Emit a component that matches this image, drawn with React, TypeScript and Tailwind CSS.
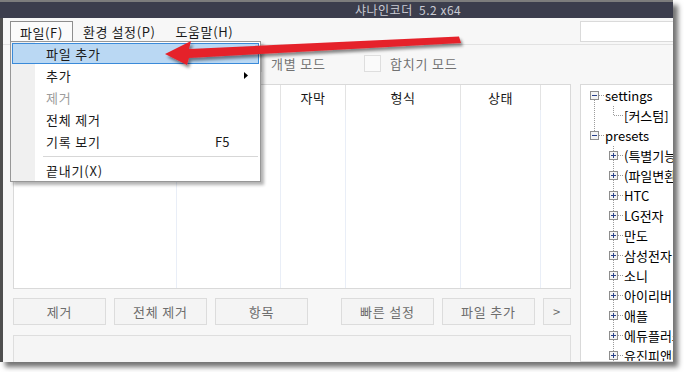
import * as React from "react";

type CellKind = "none" | "vline" | "leaf" | "minusBot" | "minusTop" | "plus";

interface TreeRow {
  cells: CellKind[];
  label: string;
}

const treeRows: TreeRow[] = [
  { cells: ["minusBot"], label: "settings" },
  { cells: ["vline", "leaf"], label: "[커스텀]" },
  { cells: ["minusTop"], label: "presets" },
  { cells: ["none", "plus"], label: "(특별기능)" },
  { cells: ["none", "plus"], label: "(파일변환)" },
  { cells: ["none", "plus"], label: "HTC" },
  { cells: ["none", "plus"], label: "LG전자" },
  { cells: ["none", "plus"], label: "만도" },
  { cells: ["none", "plus"], label: "삼성전자" },
  { cells: ["none", "plus"], label: "소니" },
  { cells: ["none", "plus"], label: "아이리버" },
  { cells: ["none", "plus"], label: "애플" },
  { cells: ["none", "plus"], label: "에듀플러스" },
  { cells: ["none", "plus"], label: "유진피앤티" },
];

const dot = { stroke: "#9b9b9b", strokeWidth: 1, strokeDasharray: "1 1" };

const TreeCell = ({ kind }: { kind: CellKind }) => {
  const hasBox = kind === "minusBot" || kind === "minusTop" || kind === "plus";
  const top = kind === "vline" || kind === "leaf" || kind === "minusTop" || kind === "plus";
  const bottom = kind === "vline" || kind === "minusBot" || kind === "plus";
  const horiz = kind === "leaf" || hasBox;
  return (
    <svg width="19" height="20" className="shrink-0">
      {top && <line x1="9.5" y1="0" x2="9.5" y2={hasBox ? 5 : 10} {...dot} />}
      {bottom && <line x1="9.5" y1={hasBox ? 14 : 10} x2="9.5" y2="20" {...dot} />}
      {horiz && <line x1={hasBox ? 14 : 10} y1="9.5" x2="19" y2="9.5" {...dot} />}
      {hasBox && (
        <>
          <rect x="5.5" y="5.5" width="8" height="8" fill="#f4f4f4" stroke="#8e8e8e" />
          <line x1="7" y1="9.5" x2="12" y2="9.5" stroke="#27408a" />
          {kind === "plus" && <line x1="9.5" y1="7" x2="9.5" y2="12" stroke="#27408a" />}
        </>
      )}
    </svg>
  );
};

const columns = ["", "", "자막", "형식", "상태", ""];

const Btn = ({ children, className = "" }: { children: React.ReactNode; className?: string }) => (
  <div
    className={`h-[27px] shrink-0 border border-[#dcdcdc] bg-[#f4f4f4] text-[13px] leading-none tracking-[0.8px] text-[#6d6d6d] flex items-center justify-center ${className}`}
  >
    {children}
  </div>
);

const MenuItem = ({
  label,
  right,
  active = false,
  disabled = false,
  h = "h-[22px]",
}: {
  label: string;
  right?: React.ReactNode;
  active?: boolean;
  disabled?: boolean;
  h?: string;
}) => (
  <div
    className={`${h} mx-[1px] flex items-center border ${
      active ? "border-[#3a8ad9] bg-[#bad8f3]" : "border-transparent"
    } ${disabled ? "text-[#9c9c9c]" : "text-[#1a1a1a]"}`}
  >
    <span className="flex-1 pl-[33px] tracking-[0.8px]">{label}</span>
    <span className="w-[43px] shrink-0">{right}</span>
  </div>
);

export default function App() {
  return (
    <div className="relative w-[684px] h-[372px] overflow-hidden bg-white font-['Noto_Sans_CJK_KR',sans-serif]">
      {/* window */}
      <div className="w-[673px] h-[362px] flex flex-col overflow-hidden bg-[#f7f7f7] shadow-[5px_5px_5px_rgba(0,0,0,0.55)]">
        <div className="h-[18px] shrink-0 border-t-2 border-[#7d7d7d] bg-[#3c3e4d] flex items-center pl-[355px] text-[12px] leading-none tracking-[0.5px] text-[#c9cad3] whitespace-pre">
          샤나인코더  5.2 x64
        </div>

        <div className="flex-1 min-h-0 flex flex-col border-l-[3px] border-[#4f4f4f]">
          {/* menu bar */}
          <div className="h-[27px] shrink-0 flex items-start pt-[3px] pl-[7px] border-b border-[#e2e2e2] text-[13px] leading-none tracking-[0.6px] text-[#1a1a1a]">
            <div className="h-[21px] px-[9px] flex items-center border border-b-0 border-[#8d8d8d] bg-[#fbfbfb]">
              파일(F)
            </div>
            <div className="h-[21px] px-[10px] flex items-center">환경 설정(P)</div>
            <div className="h-[21px] px-[10px] flex items-center">도움말(H)</div>
            <div className="ml-auto -mr-[7px] w-[100px] h-[21px] shrink-0 border border-[#dadada] bg-white" />
          </div>

          {/* toolbar */}
          <div className="h-[39px] shrink-0 flex items-center pb-[2px] pl-[242px] text-[13px] leading-none tracking-[0.8px] text-[#727272]">
            <div className="w-[119px] flex items-center gap-[9px]">
              <div className="w-[17px] h-[17px] border border-[#dedede] bg-[#fafafa]" />
              <span>개별 모드</span>
            </div>
            <div className="w-[119px] flex items-center gap-[9px]">
              <div className="w-[17px] h-[17px] border border-[#dedede] bg-[#fafafa]" />
              <span>합치기 모드</span>
            </div>
          </div>

          {/* main */}
          <div className="flex-1 min-h-0 flex pl-[10px] gap-[9px]">
            <div className="w-[558px] shrink-0 flex flex-col">
              <div className="h-[205px] shrink-0 border border-[#d9d9d9] bg-white flex flex-col">
                <div className="h-[25px] shrink-0 grid grid-cols-[163px_104px_65px_115px_80px_1fr]">
                  {columns.map((c, i) => (
                    <div
                      key={i}
                      className={`flex items-center justify-center text-[13px] leading-none tracking-[0.5px] text-[#161616] ${
                        i < 5 ? "border-r border-[#e3e3e3]" : ""
                      }`}
                    >
                      {c}
                    </div>
                  ))}
                </div>
                <div className="flex-1 grid grid-cols-[163px_104px_65px_115px_80px_1fr]">
                  {columns.map((_, i) => (
                    <div key={i} className={i < 5 ? "border-r border-[#e9eef7]" : ""} />
                  ))}
                </div>
              </div>

              <div className="mt-[9px] flex gap-[8px]">
                <Btn className="w-[93px]">제거</Btn>
                <Btn className="w-[93px]">전체 제거</Btn>
                <Btn className="w-[93px]">항목</Btn>
                <Btn className="w-[93px] ml-[25px]">빠른 설정</Btn>
                <Btn className="w-[93px]">파일 추가</Btn>
                <Btn className="w-[28px]">&gt;</Btn>
              </div>

              <div className="mt-[10px] h-[40px] shrink-0 border border-[#dedede] bg-[#f5f5f5]" />
            </div>

            <div className="w-[110px] shrink-0 border border-[#d9d9d9] bg-white pt-[1px] pl-[4px] overflow-hidden">
              {treeRows.map((r) => (
                <div key={r.label} className="h-[20px] flex items-center">
                  {r.cells.map((k, i) => (
                    <TreeCell key={i} kind={k} />
                  ))}
                  <span className="ml-[1px] text-[13px] leading-[20px] text-black whitespace-nowrap">
                    {r.label}
                  </span>
                </div>
              ))}
            </div>
          </div>
        </div>
      </div>

      {/* dropdown menu */}
      <div className="absolute left-[10px] top-[41px] w-[251px] border border-[#979797] bg-[linear-gradient(to_right,#f0f0f0_24px,#ffffff_24px)] pt-[1px] text-[13px] leading-none shadow-[3px_3px_3px_rgba(0,0,0,0.3)]">
        <MenuItem label="파일 추가" active h="h-[21px]" />
        <MenuItem
          label="추가"
          right={
            <svg width="4" height="7" className="ml-[29px]">
              <polygon points="0,0 4,3.5 0,7" fill="#000" />
            </svg>
          }
        />
        <MenuItem label="제거" disabled />
        <MenuItem label="전체 제거" />
        <MenuItem label="기록 보기" right="F5" />
        <div className="h-[8px] flex items-center">
          <div className="ml-[32px] mr-[2px] flex-1 h-px bg-[#d7d7d7]" />
        </div>
        <MenuItem label="끝내기(X)" h="h-[21px]" />
      </div>

      {/* red arrow */}
      <svg className="absolute left-0 top-0 pointer-events-none" width="684" height="372">
        <defs>
          <filter id="sh" x="-10%" y="-50%" width="120%" height="200%">
            <feDropShadow dx="2" dy="3" stdDeviation="1.5" floodColor="#000" floodOpacity="0.45" />
          </filter>
        </defs>
        <polygon
          points="165,54 191,41 189,49 459,36.5 461,43 189,58 187,65"
          fill="#e5222b"
          filter="url(#sh)"
        />
      </svg>
    </div>
  );
}
